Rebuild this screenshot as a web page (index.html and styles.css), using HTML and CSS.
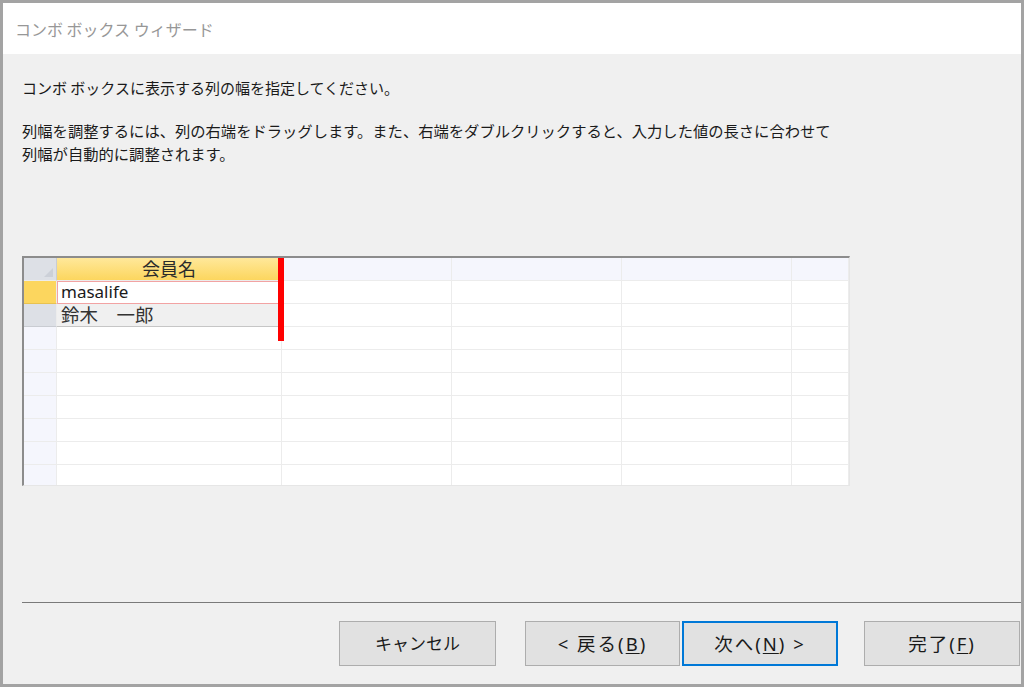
FILE: index.html
```html
<!DOCTYPE html>
<html lang="ja">
<head>
<meta charset="utf-8">
<title>コンボ ボックス ウィザード</title>
<link rel="stylesheet" href="styles.css">
</head>
<body>
<div class="window">
  <div class="titlebar">コンボ ボックス ウィザード</div>
  <div class="body">
    <p class="lead">コンボ ボックスに表示する列の幅を指定してください。</p>
    <p class="desc">列幅を調整するには、列の右端をドラッグします。また、右端をダブルクリックすると、入力した値の長さに合わせて<br>列幅が自動的に調整されます。</p>
    <div class="sheet">
      <div class="grid">
        <div class="c corner"><span class="tri"></span></div><div class="c hd-sel">会員名</div><div class="c hd"></div><div class="c hd"></div><div class="c hd"></div><div class="c hd"></div>
        <div class="c rh-sel"></div><div class="c cur">masalife</div><div class="c"></div><div class="c"></div><div class="c"></div><div class="c"></div>
        <div class="c rh-gray"></div><div class="c row2">鈴木　一郎</div><div class="c"></div><div class="c"></div><div class="c"></div><div class="c"></div>
        <div class="c rh"></div><div class="c"></div><div class="c"></div><div class="c"></div><div class="c"></div><div class="c"></div>
        <div class="c rh"></div><div class="c"></div><div class="c"></div><div class="c"></div><div class="c"></div><div class="c"></div>
        <div class="c rh"></div><div class="c"></div><div class="c"></div><div class="c"></div><div class="c"></div><div class="c"></div>
        <div class="c rh"></div><div class="c"></div><div class="c"></div><div class="c"></div><div class="c"></div><div class="c"></div>
        <div class="c rh"></div><div class="c"></div><div class="c"></div><div class="c"></div><div class="c"></div><div class="c"></div>
        <div class="c rh"></div><div class="c"></div><div class="c"></div><div class="c"></div><div class="c"></div><div class="c"></div>
        <div class="c rh"></div><div class="c"></div><div class="c"></div><div class="c"></div><div class="c"></div><div class="c"></div>
      </div>
      <div class="marker"></div>
    </div>
    <div class="sep"></div>
    <div class="buttons">
      <button class="btn cancel">キャンセル</button>
      <button class="btn wide back">&lt; 戻る(<u>B</u>)</button>
      <button class="btn wide next">次へ(<u>N</u>) &gt;</button>
      <button class="btn wide finish">完了(<u>F</u>)</button>
    </div>
  </div>
</div>
</body>
</html>
```
FILE: styles.css
```css
html, body {
  margin: 0;
  padding: 0;
}
body {
  width: 1024px;
  height: 687px;
  overflow: hidden;
  font-family: "Noto Sans CJK JP", "Noto Sans", sans-serif;
  color: #1a1a1a;
}
.window {
  width: 1024px;
  height: 687px;
  box-sizing: border-box;
  border: 3px solid #a3a3a3;
  background: #f0f0f0;
  display: flex;
  flex-direction: column;
}
.titlebar {
  height: 51px;
  flex: none;
  background: #ffffff;
  display: flex;
  align-items: center;
  padding-left: 12px;
  color: #979797;
  font-size: 16px;
}
.body {
  flex: 1;
  display: flex;
  flex-direction: column;
  padding-left: 19px;
}
.lead {
  margin: 22px 0 0;
  font-size: 15px;
  line-height: 23px;
}
.desc {
  margin: 20px 0 0;
  font-size: 15.3px;
  line-height: 23px;
}
.sheet {
  position: relative;
  margin-top: 91px;
  width: 828px;
  height: 230px;
  box-sizing: border-box;
  border-top: 2px solid #8c8c8c;
  border-left: 2px solid #8c8c8c;
  border-right: 1px solid #e6e6e6;
  border-bottom: 1px solid #e6e6e6;
  background: #ffffff;
  overflow: hidden;
}
.grid {
  display: grid;
  grid-template-columns: 33px 225px 170px 170px 170px 1fr;
  grid-auto-rows: 23px;
}
.c {
  box-sizing: border-box;
  border-right: 1px solid #ececec;
  border-bottom: 1px solid #ececec;
  background: #ffffff;
  font-size: 17.5px;
  line-height: 21px;
  padding-left: 4px;
  white-space: nowrap;
}
.corner {
  position: relative;
  background: #dde0e6;
  border-right: 1px solid #c9ccd2;
}
.tri {
  position: absolute;
  right: 3px;
  bottom: 3px;
  width: 0;
  height: 0;
  border-left: 9px solid transparent;
  border-bottom: 9px solid #ccd0d8;
}
.hd-sel {
  background: linear-gradient(#ffe89a, #fcd65e);
  text-align: center;
  padding-left: 0;
  color: #2b2b2b;
  border-right: 1px solid #f0c850;
  font-size: 18px;
}
.hd {
  background: #f5f6fd;
}
.rh {
  background: #f5f6fd;
}
.rh-sel {
  background: #fcd65e;
  border-bottom: 1px solid #e8c250;
}
.rh-gray {
  background: #dde0e6;
  border-bottom: 1px solid #c9ccd2;
}
.cur {
  border: 1px solid #f2a3a3;
  line-height: 20px;
  padding-left: 3px;
  font-family: "Noto Sans", "Noto Sans CJK JP", sans-serif;
  font-size: 17px;
}
.row2 {
  background: #f0f0f0;
  border-bottom: 1px solid #c6c6c6;
  color: #333333;
  font-size: 18.5px;
  line-height: 20px;
}
.marker {
  position: absolute;
  left: 254px;
  top: 0;
  width: 6px;
  height: 83px;
  background: #ff0000;
}
.sep {
  margin-top: 116px;
  height: 1px;
  background: #7a7a7a;
}
.buttons {
  display: flex;
  margin-top: 18px;
  padding-left: 317px;
}
.btn {
  height: 45px;
  box-sizing: border-box;
  background: #e1e1e1;
  border: 1px solid #adadad;
  font-family: "Noto Sans", "Noto Sans CJK JP", sans-serif;
  font-size: 17px;
  color: #1a1a1a;
  padding: 0 0 2px;
  border-radius: 0;
}
.wide {
  font-size: 18.5px;
  letter-spacing: 2px;
}
.btn u {
  text-underline-offset: 2px;
}
.cancel {
  width: 157px;
}
.back {
  width: 155px;
  margin-left: 29px;
}
.next {
  width: 156px;
  margin-left: 2px;
  border: 2px solid #0078d7;
}
.finish {
  width: 156px;
  margin-left: 26px;
}
```
